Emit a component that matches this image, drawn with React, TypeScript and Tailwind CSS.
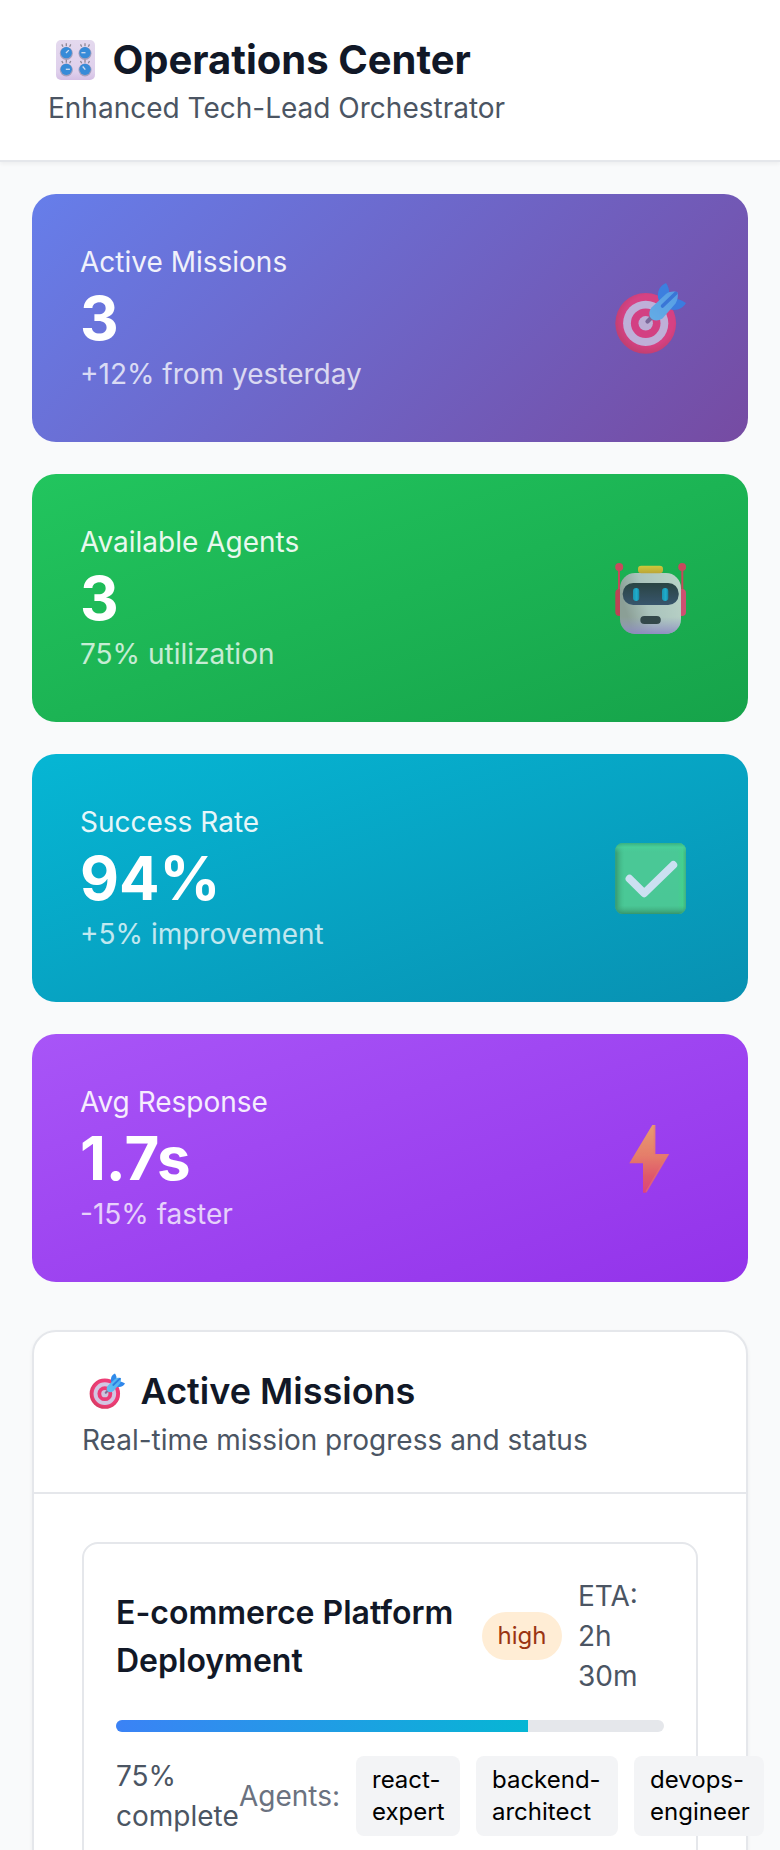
import React from "react";

function Target({ className, id }: { className: string; id: string }) {
  return (
    <svg viewBox="14 12 72 72" className={className} aria-hidden="true">
      <defs>
        <radialGradient id={id + "r"} cx="0.55" cy="0.45" r="0.55">
          <stop offset="0.75" stopColor="#ef3d78" />
          <stop offset="1" stopColor="#d83a62" />
        </radialGradient>
        <linearGradient id={id + "d"} x1="0" y1="1" x2="1" y2="0">
          <stop offset="0" stopColor="#62c2f2" />
          <stop offset="1" stopColor="#4fb0f2" />
        </linearGradient>
      </defs>
      <circle cx="45.7" cy="53.3" r="30.4" fill={`url(#${id}r)`} />
      <circle cx="45.7" cy="53.3" r="22.6" fill="#d2c6e2" />
      <circle cx="45.7" cy="53.3" r="14.8" fill="#ec3b77" />
      <circle cx="45.7" cy="53.3" r="7.2" fill="#cfc3de" />
      <path d="M47.5 51.5 54 45" stroke="#7d6c93" strokeWidth="4.2" strokeLinecap="round" />
      <path d="M58 27.500C57 20 61 15 66 13 68 16 69.500 19 69 24L60 34Z" fill="#2f8aea" />
      <path d="M71 31 77 29C81 30 84 31.500 86 33 83 38 78 41 70 39.500L64 38Z" fill="#2f86ea" />
      <path d="M51.500 37.500 66 24C70 21 75 21 77.500 22.500 78.500 26 77.500 30 75.500 33.500L62.500 48.500C54 54 45 47 51.500 37.500Z" fill={`url(#${id}d)`} />
      <path d="M62.500 36 75.800 23.300" stroke="#2c7ee0" strokeWidth="3.600" strokeLinecap="round" />
    </svg>
  );
}

function Robot({ className }: { className: string }) {
  return (
    <svg viewBox="14 12 72 72" className={className} aria-hidden="true">
      <defs>
        <linearGradient id="rbHead" x1="0" y1="0.3" x2="1" y2="0">
          <stop offset="0" stopColor="#a89ca8" />
          <stop offset="0.35" stopColor="#cfc9d8" />
          <stop offset="1" stopColor="#e2dee6" />
        </linearGradient>
        <linearGradient id="rbShade" x1="0" y1="0" x2="0" y2="1">
          <stop offset="0.72" stopColor="#b49be0" stopOpacity="0" />
          <stop offset="1" stopColor="#aa80e0" stopOpacity="0.9" />
        </linearGradient>
        <linearGradient id="rbVisor" x1="0" y1="0" x2="0" y2="1">
          <stop offset="0" stopColor="#2e2a40" />
          <stop offset="1" stopColor="#404074" />
        </linearGradient>
        <linearGradient id="rbHat" x1="0" y1="0" x2="0" y2="1">
          <stop offset="0" stopColor="#fbd035" />
          <stop offset="1" stopColor="#e5a332" />
        </linearGradient>
        <linearGradient id="rbEye" x1="0" y1="0" x2="1" y2="0">
          <stop offset="0" stopColor="#1b90cc" />
          <stop offset="0.6" stopColor="#22aeec" />
          <stop offset="1" stopColor="#157dba" />
        </linearGradient>
      </defs>
      <path d="M19 18V42M82.300 18V42" stroke="#f0305c" strokeWidth="2" />
      <circle cx="19.200" cy="17" r="4" fill="#f43060" />
      <circle cx="82.200" cy="17" r="4" fill="#f43060" />
      <rect x="15.300" y="39" width="11" height="27" rx="4" fill="#e42a56" />
      <rect x="75" y="39" width="11" height="27" rx="4" fill="#fb3a7a" />
      <rect x="20" y="23" width="61" height="61" rx="15" fill="url(#rbHead)" />
      <rect x="20" y="23" width="61" height="61" rx="15" fill="url(#rbShade)" />
      <rect x="38" y="15.700" width="25" height="7.500" rx="3.300" fill="url(#rbHat)" />
      <rect x="22.700" y="33" width="56" height="22" rx="10.500" fill="url(#rbVisor)" />
      <rect x="33" y="38" width="6.300" height="13" rx="3.150" fill="url(#rbEye)" />
      <rect x="62" y="38" width="6.300" height="13" rx="3.150" fill="url(#rbEye)" />
      <rect x="40.300" y="66" width="20.500" height="8" rx="4" fill="#3a304a" />
    </svg>
  );
}

function Check({ className }: { className: string }) {
  return (
    <svg viewBox="14 12 72 72" className={className} aria-hidden="true">
      <defs>
        <linearGradient id="ckX" x1="0" y1="0" x2="1" y2="0">
          <stop offset="0" stopColor="#3f8a52" stopOpacity="0.85" />
          <stop offset="0.13" stopColor="#4fc07a" stopOpacity="0" />
          <stop offset="0.88" stopColor="#50e080" stopOpacity="0" />
          <stop offset="0.95" stopColor="#50e47e" stopOpacity="0.7" />
          <stop offset="1" stopColor="#4cab66" stopOpacity="0.7" />
        </linearGradient>
        <linearGradient id="ckY" x1="0" y1="0" x2="0" y2="1">
          <stop offset="0" stopColor="#3fa968" stopOpacity="0.7" />
          <stop offset="0.06" stopColor="#59e292" stopOpacity="0.6" />
          <stop offset="0.14" stopColor="#59d491" stopOpacity="0" />
          <stop offset="0.88" stopColor="#4fae6e" stopOpacity="0" />
          <stop offset="1" stopColor="#3d8950" stopOpacity="0.85" />
        </linearGradient>
      </defs>
      <rect x="15.300" y="13" width="70.700" height="71" rx="7.500" fill="#5bd38d" />
      <rect x="15.300" y="13" width="70.700" height="71" rx="7.500" fill="url(#ckX)" />
      <rect x="15.300" y="13" width="70.700" height="71" rx="7.500" fill="url(#ckY)" />
      <path d="M29.500 48.700 44.200 63.300 73.300 35" fill="none" stroke="#fdf1ff" strokeWidth="7.800" strokeLinecap="round" strokeLinejoin="round" />
    </svg>
  );
}

function Bolt({ className }: { className: string }) {
  return (
    <svg viewBox="14 12 72 72" className={className} aria-hidden="true">
      <defs>
        <linearGradient id="bolt" x1="0" y1="0" x2="0" y2="1">
          <stop offset="0" stopColor="#fbb350" />
          <stop offset="0.45" stopColor="#f88e4a" />
          <stop offset="0.75" stopColor="#f2604a" />
          <stop offset="1" stopColor="#ee4464" />
        </linearGradient>
      </defs>
      <path d="M52.300 15H55.300V44H69L46 82.700H43V53.300H29.300Z" fill="url(#bolt)" />
      <path d="M54.500 15.500V44.700H68L46 82" fill="none" stroke="#fb8058" strokeWidth="1.600" opacity="0.5" />
    </svg>
  );
}

const knobs = [
  { x: 26.3, y: 22.7, a: 45 },
  { x: 45, y: 22.7, a: -90 },
  { x: 26.3, y: 39.3, a: 90 },
  { x: 45, y: 39.3, a: -40 },
];

function Knobs({ className }: { className: string }) {
  return (
    <svg viewBox="16 10 40 40" className={className} aria-hidden="true">
      <defs>
        <linearGradient id="panel" x1="0" y1="0" x2="0" y2="1">
          <stop offset="0" stopColor="#e4d9ee" />
          <stop offset="0.8" stopColor="#dfd0ec" />
          <stop offset="1" stopColor="#d4bfe4" />
        </linearGradient>
      </defs>
      <rect x="16" y="10" width="39" height="40" rx="5" fill="url(#panel)" />
      {knobs.map((k) => (
        <g key={k.x + "-" + k.y} transform={`translate(${k.x} ${k.y})`}>
          <path d="M0-6.500V-9.500M-3.300-6-4.500-8.300M3.300-6 4.500-8.300" stroke="#8d8795" strokeWidth="1.300" />
          <circle cy="0.700" r="6.500" fill="#a39fbd" />
          <circle r="5.600" fill="#368bd8" />
          <path d="M0 0.500V-3.600" stroke="#cfdcf0" strokeWidth="1.300" transform={`rotate(${k.a})`} />
        </g>
      ))}
    </svg>
  );
}

const iconClass = "mr-[14px] h-[72px] w-[72px] shrink-0 opacity-80";

const stats = [
  { label: "Active Missions", value: "3", note: "+12% from yesterday", bg: "bg-[linear-gradient(135deg,#667eea_0%,#764ba2_100%)]", icon: <Target className={iconClass} id="tgA" /> },
  { label: "Available Agents", value: "3", note: "75% utilization", bg: "bg-[linear-gradient(to_bottom_right,#22c55e,#16a34a)]", icon: <Robot className={iconClass} /> },
  { label: "Success Rate", value: "94%", note: "+5% improvement", bg: "bg-[linear-gradient(to_bottom_right,#06b6d4,#0891b2)]", icon: <Check className={iconClass} /> },
  { label: "Avg Response", value: "1.7s", note: "-15% faster", bg: "bg-[linear-gradient(to_bottom_right,#a855f7,#9333ea)]", icon: <Bolt className={iconClass} /> },
];

const agents = [
  { top: "react-", bottom: "expert", w: "w-[104px]" },
  { top: "backend-", bottom: "architect", w: "w-[142px]" },
  { top: "devops-", bottom: "engineer", w: "w-[130px]" },
];

export default function App() {
  return (
    <div className="flex h-[1850px] w-[780px] flex-col overflow-hidden bg-[#f9fafb] font-['Inter',sans-serif] text-[28px] leading-10 text-black">
      <header className="h-[162px] shrink-0 border-b-2 border-[#e5e7eb] bg-white px-12 py-8 shadow-[0_2px_4px_rgba(0,0,0,0.05)]">
        <h1 className="flex h-14 items-center text-[40px] leading-[56px] font-bold text-[#111827]">
          <Knobs className="mr-[16.5px] ml-2 h-10 w-10" />
          Operations Center
        </h1>
        <p className="text-[#4b5563]">Enhanced Tech-Lead Orchestrator</p>
      </header>

      <main className="flex flex-col px-8 pt-8">
        <div className="flex flex-col gap-8">
          {stats.map((s) => (
            <div key={s.label} className={`flex h-[248px] items-center justify-between rounded-[24px] p-12 text-white ${s.bg}`}>
              <div>
                <p className="opacity-90">{s.label}</p>
                <p className="text-[60px] leading-[72px] font-bold">{s.value}</p>
                <p className="opacity-75">{s.note}</p>
              </div>
              {s.icon}
            </div>
          ))}
        </div>

        <section className="mt-12 h-[900px] shrink-0 rounded-[24px] border-2 border-[#e5e7eb] bg-white shadow-[0_2px_4px_rgba(0,0,0,0.05)]">
          <div className="h-[162px] border-b-2 border-[#e5e7eb] px-12 py-8">
            <h2 className="flex h-14 items-center pb-[2px] text-[36px] leading-[54px] font-semibold text-[#111827]">
              <Target className="mr-[15.5px] ml-[7px] h-9 w-9" id="tgB" />
              Active Missions
            </h2>
            <p className="text-[#4b5563]">Real-time mission progress and status</p>
          </div>

          <div className="p-12">
            <article className="h-[560px] rounded-[16px] border-2 border-[#e5e7eb] p-8">
              <div className="flex h-[120px] items-center">
                <h3 className="w-[366px] shrink-0 pt-[2px] text-[32px] leading-[48px] font-semibold text-[#111827]">
                  E-commerce Platform Deployment
                </h3>
                <span className="h-12 w-20 shrink-0 rounded-full bg-[#ffedd5] py-2 text-center text-[24px] leading-8 text-[#9a3412]">high</span>
                <span className="ml-4 w-[80px] text-[#4b5563]">
                  ETA:
                  <br />
                  2h
                  <br />
                  30m
                </span>
              </div>
              <div className="mt-6 h-3 overflow-hidden rounded-full bg-[#e5e7eb]">
                <div className="h-full w-[412px] bg-[linear-gradient(90deg,#3b82f6,#06b6d4)]" />
              </div>
              <div className="mt-6 flex items-center">
                <span className="w-[123px] shrink-0 text-[#4b5563]">75% complete</span>
                <span className="w-[117px] shrink-0 text-[#6b7280]">Agents:</span>
                <div className="flex gap-4">
                  {agents.map((a) => (
                    <span key={a.top} className={`h-20 shrink-0 rounded-lg bg-[#f3f4f6] px-4 py-2 text-[24px] leading-8 ${a.w}`}>
                      {a.top}
                      <br />
                      {a.bottom}
                    </span>
                  ))}
                </div>
              </div>
            </article>
          </div>
        </section>
      </main>
    </div>
  );
}
